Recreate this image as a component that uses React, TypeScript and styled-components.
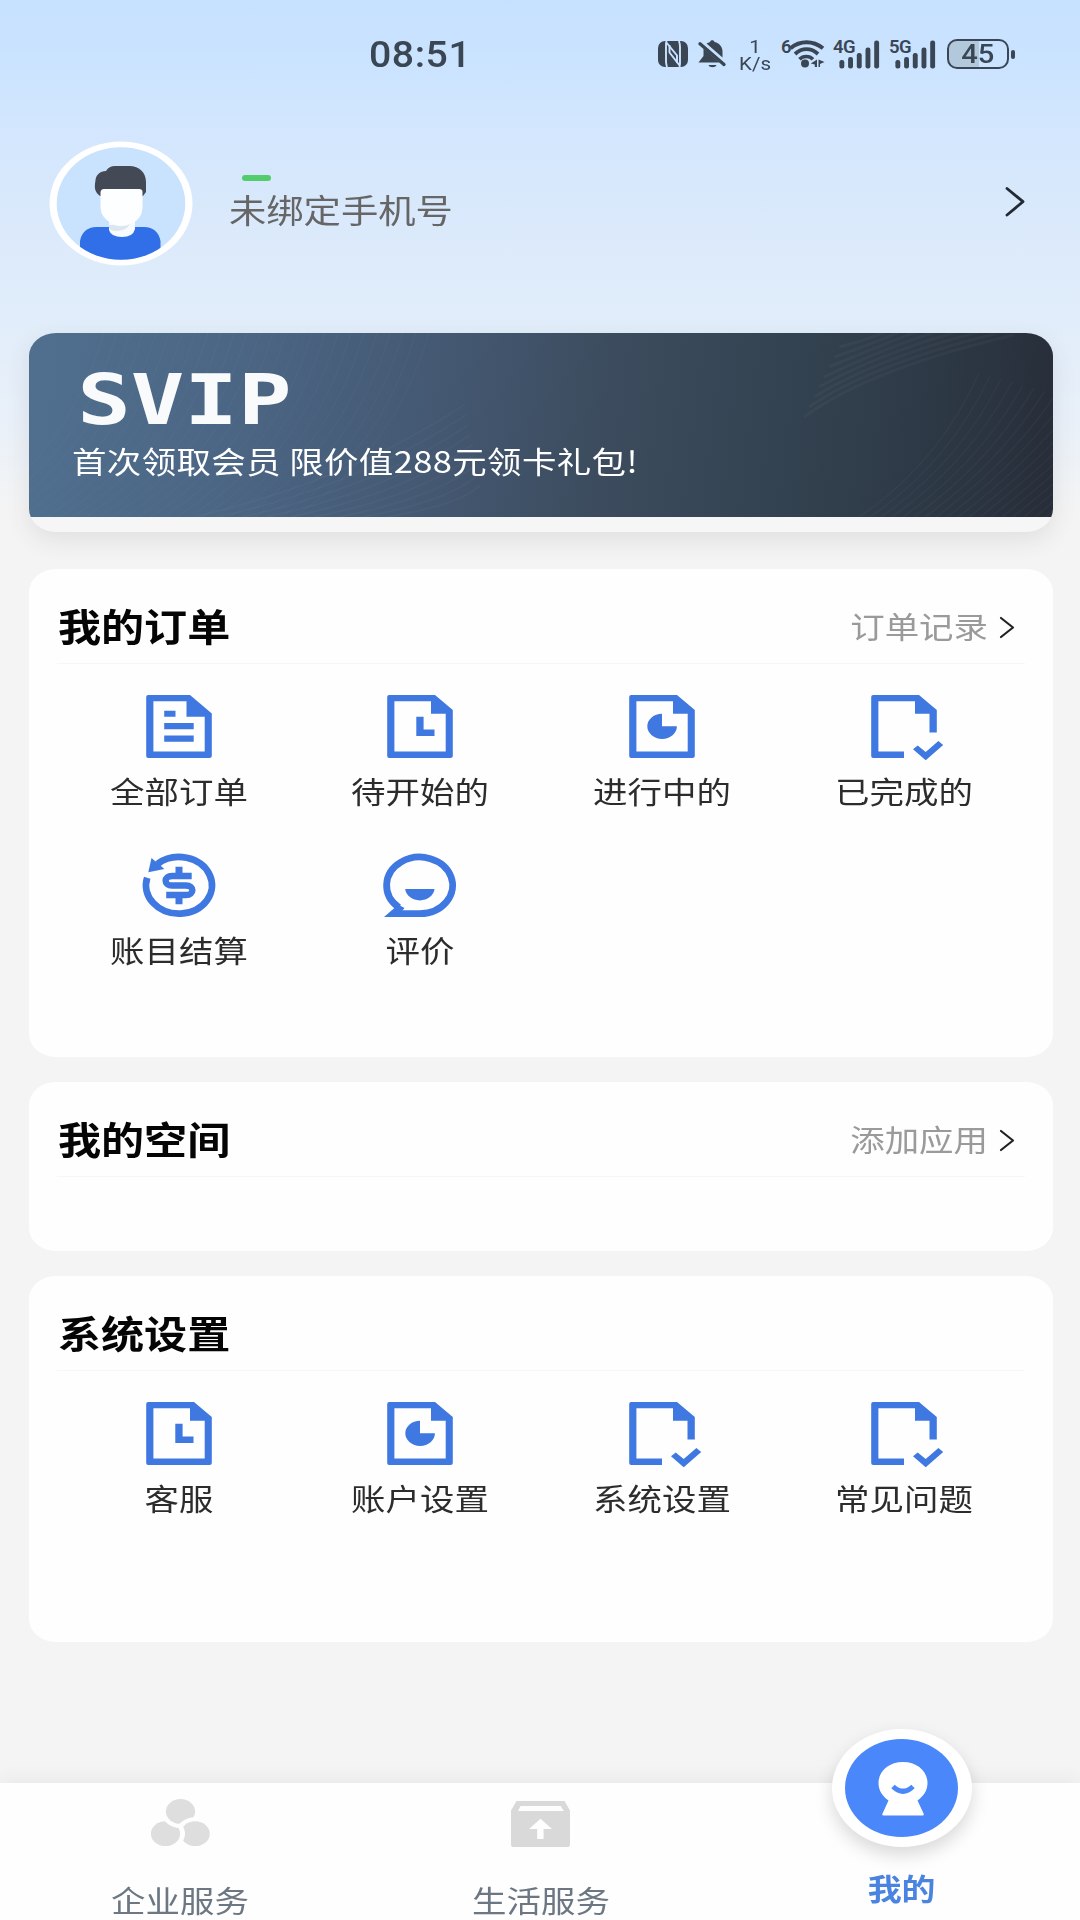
import React from "react";
import styled, { createGlobalStyle, css } from "styled-components";

const BLUE = "#3f78e0";
const INK = "#3a4654";
const STRETCH = 1.148;

const GlobalStyle = createGlobalStyle`
  *, *::before, *::after { box-sizing: border-box; }
  body {
    margin: 0;
    font-family: "Noto Sans CJK SC", "Noto Sans", sans-serif;
    background: #f4f4f4;
  }
  svg { display: block; overflow: visible; flex: none; }
`;

const Page = styled.div`
  display: flex;
  flex-direction: column;
  width: 1080px;
  height: 1920px;
  overflow: hidden;
  background: linear-gradient(180deg, #c6e1ff 0, #cae3ff 60px, #d2e6fe 120px, #dae9fb 220px, #e1edfa 320px, #e9f0f9 420px, #f4f4f4 510px);
`;

/* Wide-set text: glyphs are stretched horizontally from the given edge. */
const Wide = styled.span<{ $size: number; $color: string; $bold?: boolean; $from?: string; $track?: number }>`
  display: inline-block;
  margin: 0;
  font-size: ${(p) => p.$size}px;
  line-height: 40px;
  letter-spacing: ${(p) => p.$track ?? 0}px;
  color: ${(p) => p.$color};
  font-weight: ${(p) => (p.$bold ? 700 : 400)};
  white-space: nowrap;
  transform: scaleX(${STRETCH});
  transform-origin: ${(p) => p.$from ?? "center"} center;
`;

/* ---------- status bar ---------- */
const StatusBar = styled.header`
  display: flex;
  align-items: center;
  height: 108px;
  padding-left: 369px;
  font-family: Roboto, sans-serif;
  color: ${INK};
`;
const Clock = styled.time`
  width: 289px;
  padding-top: 2px;
  font-size: 36px;
  font-weight: 500;
  line-height: 40px;
  letter-spacing: 0.5px;
  transform: scaleX(1.09);
  transform-origin: left center;
`;
const Icons = styled.div`
  display: flex;
  align-items: center;
`;
const Gap = styled.i<{ $w: number }>`
  flex: none;
  width: ${(p) => p.$w}px;
`;
const Speed = styled.div`
  display: flex;
  flex-direction: column;
  align-items: center;
  width: 32px;
  font-size: 18px;
  line-height: 17px;
  font-weight: 400;
  padding-top: 1px;
  span { transform: scaleX(1.14); }
`;
const NetTag = styled.span<{ $w: number }>`
  align-self: flex-start;
  width: ${(p) => p.$w}px;
  font-size: 18.5px;
  font-weight: 600;
  line-height: 15px;
  letter-spacing: -0.5px;
  white-space: nowrap;
`;
const Signal = styled.div<{ $pull: number }>`
  display: flex;
  height: 29px;
  svg { margin-left: ${(p) => -p.$pull}px; }
`;
const Battery = styled.div`
  display: flex;
  align-items: center;
  justify-content: center;
  width: 62px;
  height: 30px;
  border: 2.5px solid ${INK};
  border-radius: 10px;
  background: linear-gradient(90deg, #b2c9dc 0 51%, transparent 51%);
  font-size: 26px;
  font-weight: 500;
  line-height: 26px;
  span { transform: scaleX(1.12); }
`;
const Nub = styled.i`
  width: 4px;
  height: 9px;
  margin-left: 2px;
  border-radius: 2px;
  background: ${INK};
`;

/* ---------- profile ---------- */
const Profile = styled.section`
  display: flex;
  align-items: flex-start;
  height: 225px;
  padding: 33px 55px 0 49px;
`;
const Who = styled.div`
  display: flex;
  flex-direction: column;
  align-items: flex-start;
  flex: 1;
  padding: 34px 0 0 36px;
`;
const Dash = styled.i`
  width: 29px;
  height: 6px;
  margin: 0 0 8px 13px;
  border-radius: 3px;
  background: #52cc6c;
`;

/* ---------- banner ---------- */
const Banner = styled.section`
  flex: none;
  width: 1024px;
  height: 199px;
  margin-left: 29px;
  border-radius: 27px / 23px;
  background: #f6f6f6;
  box-shadow: 0 8px 24px rgba(60, 60, 70, 0.11);
  overflow: hidden;
`;
const BannerFace = styled.div`
  display: grid;
  height: 184px;
  background: linear-gradient(97deg, #506f8e 0%, #4b6684 20%, #445872 40%, #3c4c5e 56%, #334250 74%, #2d3845 88%, #272d39 100%);
  > * { grid-area: 1 / 1; }
`;
const BannerText = styled.div`
  display: flex;
  flex-direction: column;
  align-items: flex-start;
  padding: 29px 0 0 43px;
`;
const Svip = styled.strong`
  font: 700 69px/76px "DejaVu Sans Mono", monospace;
  color: #f8fafc;
  padding-left: 4px;
  transform: scaleX(1.29);
  transform-origin: left center;
  margin-bottom: 2px;
`;

/* ---------- cards ---------- */
const Card = styled.section<{ $h: number; $top: number }>`
  flex: none;
  width: 1024px;
  height: ${(p) => p.$h}px;
  margin: ${(p) => p.$top}px 0 0 29px;
  padding: 0 28px;
  border-radius: 27px / 23px;
  background: #fefefe;
`;
const CardHead = styled.div`
  display: flex;
  align-items: center;
  justify-content: space-between;
  height: 95px;
  padding: 17px 11px 0 1px;
  border-bottom: 1px solid #f6f6f6;
`;
const More = styled.div`
  display: flex;
  align-items: center;
  gap: 12px;
  svg { margin-top: 6px; }
`;
const Grid = styled.div`
  display: grid;
  grid-template-columns: repeat(4, 241.8px);
  grid-auto-rows: 159px;
  padding: 31px 0 0 0.7px;
`;
const Entry = styled.div`
  display: flex;
  flex-direction: column;
  align-items: center;
  gap: 10.5px;
`;

/* ---------- tab bar ---------- */
const TabBar = styled.nav`
  display: grid;
  grid-template-columns: 360.4px 361px 361px;
  flex: none;
  height: 137px;
  margin-top: auto;
  background: #fefefe;
  box-shadow: 0 -4px 18px rgba(0, 0, 0, 0.05);
`;
const Tab = styled.div<{ $active?: boolean }>`
  display: flex;
  flex-direction: column;
  align-items: center;
  justify-content: flex-end;
  gap: 32px;
  height: 137px;
  padding-bottom: 1px;
  ${(p) =>
    p.$active &&
    css`
      gap: 20px;
      padding-bottom: 13px;
    `}
`;
const Bubble = styled.div`
  display: flex;
  align-items: center;
  justify-content: center;
  flex: none;
  width: 140px;
  height: 118px;
  border-radius: 50%;
  background: #fff;
  box-shadow: 0 8px 18px rgba(0, 0, 0, 0.15);
`;
const BubbleFace = styled.div`
  display: flex;
  align-items: center;
  justify-content: center;
  width: 113px;
  height: 98px;
  padding: 2px 0 0 2px;
  border-radius: 50%;
  background: #4987fa;
`;

/* ---------- drawings ---------- */
const Nfc = () => (
  <svg width="30" height="26" viewBox="0 0 30 26">
    <rect width="30" height="26" rx="7" fill={INK} />
    <g fill="none" stroke="#cbe3ff" strokeWidth="1.900" strokeLinejoin="round">
      <path d="M8.500 0Q8 2 8 4V20Q8 23 9 26M8 1 19 14.500V22" />
      <path d="M21.500 26Q22 24 22 22V6Q22 3 21 0M22 25 11.500 11.500V4" />
    </g>
  </svg>
);
const BellOff = () => (
  <svg width="28" height="28" viewBox="0 0 28 28" fill={INK}>
    <path d="M8.500 3.500 12 2C12.500-.5 16-.5 16.500 2 21.500 3 24.500 7 24.500 11.500V17.500Z" />
    <path d="M5.500 8.500V16L.5 22.500H21.500L5.500 8.500Z" />
    <path d="M10.500 25h8c-1 3-7 3-8 0Z" />
    <path d="m2 3.800 24 20.700" stroke={INK} strokeWidth="3.400" strokeLinecap="round" />
  </svg>
);
const Wifi = () => (
  <svg width="38" height="28" viewBox="0 0 38 28" fill="none" stroke={INK}>
    <path d="M1.500 8.200C11 .2 24 .2 34 8.200" strokeWidth="4" />
    <path d="M6 14C13 7.500 22 7.500 29 14" strokeWidth="3.800" />
    <path d="M10.500 19.200C14 15.500 20.500 15.500 24 19.200" strokeWidth="3.600" />
    <circle cx="16" cy="23.500" r="4" fill={INK} stroke="none" />
    <path d="M28 19.500v7.500h-2.200v-2.500l-4-1ZM29.500 19.500v7.500h1.500v-3l4.500-2Z" fill={INK} stroke="none" />
  </svg>
);
const Bars = () => (
  <svg width="40" height="29" viewBox="0 0 40 29" fill={INK}>
    {[8.5, 11.5, 15.5, 21, 28].map((h, i) => (
      <rect key={h} x={i * 8.7 - 0.6} y={28.5 - h} width="4.900" height={h} rx="2.200" />
    ))}
  </svg>
);
const Chevron = () => (
  <svg width="14" height="21" viewBox="0 0 14 21" fill="none" stroke="#222" strokeWidth="2.200" strokeLinecap="round" strokeLinejoin="round">
    <path d="M1 1 13 10.500 1 20" />
  </svg>
);
const Avatar = () => (
  <svg width="144" height="125" viewBox="0 0 144 125">
    <clipPath id="face"><ellipse cx="72" cy="62.500" rx="64.300" ry="56.300" /></clipPath>
    <ellipse cx="72" cy="62.500" rx="71.500" ry="62" fill="#fff" />
    <g clipPath="url(#face)">
      <rect width="144" height="125" fill="#c9e3fe" />
      <path d="M31 108V100Q33.500 86.500 47.500 86H95Q109 86.500 111.500 100V125H31Z" fill="#316fe8" />
      <path d="M60 80H86V88Q84 96 73 96Q62 96 60 89Z" fill="#f7fafe" />
      <path d="M65 84Q74 87 81 83Q77 90.500 66 90Q62 90 60 87V84Z" fill="#dce6ef" />
      <path d="M51 55C44 50 46 44 46.500 39C47 34 51 30 57 30C59 26.500 62 25 66 25H80C91 25 97 32 97 41V51L94 55Z" fill="#444956" />
      <path d="M51.500 51Q52 48 55 48H90Q93.500 48 93.500 51V67Q93 78 83 82Q72 86.500 62 82Q51.500 76 51.500 66Z" fill="#fdfeff" />
    </g>
  </svg>
);
const Waves = () => (
  <svg width="1024" height="184" viewBox="0 0 1024 184" fill="none" stroke="#c0ccd6">
    {Array.from({ length: 26 }, (_, i) => (
      <path key={`a${i}`} d={`M${-60 + i * 13} 184Q${40 + i * 13} 120 ${75 + i * 13} 0`} strokeWidth="1" opacity="0.050" />
    ))}
    {Array.from({ length: 9 }, (_, i) => (
      <path key={`b${i}`} d={`M${165 + i * 24} ${184}Q${320 + i * 14} ${148 + i * 3} ${435 + i * 2} ${72 + i * 10}`} strokeWidth="2" opacity="0.040" />
    ))}
    {Array.from({ length: 8 }, (_, i) => (
      <path key={`c${i}`} d={`M${775 + i * 5} ${84 - i * 10}Q${840 + i * 3} ${36 - i * 5} ${985 - i * 16} ${2 - i * 2}`} strokeWidth="3" opacity="0.040" />
    ))}
    {Array.from({ length: 22 }, (_, i) => (
      <path key={`d${i}`} d={`M${830 + i * 11} 184Q${910 + i * 10} 130 ${950 + i * 11} ${40 + i * 3}`} strokeWidth="1.500" opacity="0.045" />
    ))}
  </svg>
);

type IconName = "list" | "clock" | "pie" | "check" | "money" | "chat";
const DOC = "M6.200 0H52L69.800 15V61Q69.800 63 67.500 63H6.200Q4.200 63 4.200 61V2Q4.200 0 6.200 0ZM11.400 6.300V56.500H62.700V18.700H48V6.300Z";

const EntryIcon = ({ name }: { name: IconName }) => (
  <svg width="74" height="64" viewBox="0 0 74 64" fill={BLUE} fillRule="evenodd">
    {name === "list" && (
      <>
        <path d="M6.200 0H48L69.800 18.500V61Q69.800 63 67.500 63H6.200Q4.200 63 4.200 61V2Q4.200 0 6.200 0ZM11.400 6.300V56.500H62.700V21.700H44.500V6.300Z" />
        <path d="M22.200 15.700H33.500V21.700H22.200ZM22.200 28H51.700V34.300H22.200ZM22.200 40.400H51.700V46.800H22.200Z" />
      </>
    )}
    {name === "clock" && (
      <>
        <path d={DOC} />
        <path d="M33.300 21.700H40.600V34.400H51.500V41H33.300Z" />
      </>
    )}
    {name === "pie" && (
      <>
        <path d={DOC} />
        <path d="M37 31.300V18.700A14.800 12.600 0 1 0 51.900 31.300Z" />
      </>
    )}
    {name === "check" && (
      <>
        <path d="M6.200 0H52L69.800 15V37.400H62.500V18.700H48V6.300H11.400V56.500H37V63H6.200Q4.200 63 4.200 61V2Q4.200 0 6.200 0Z" />
        <path d="M46 54.300 50.700 50.500 58.700 57 71.400 46 76.200 50 58.700 65.300Z" />
      </>
    )}
    {name === "money" && (
      <>
        <g fill="none" stroke={BLUE} strokeWidth="6.800">
          <path d="M5.200 23.700A33 28.300 0 1 0 15.400 9.900" />
          <path d="M49.700 22H30C21.500 22 21.500 31.500 30 31.500H44C52.500 31.500 52.500 41 44 41H24.200" strokeWidth="6.400" />
          <path d="M37 12.700V22M37 41V50.300" strokeWidth="7" />
        </g>
        <path d="M9.500 4 6.300 18.300 22.400 15Z" />
      </>
    )}
    {name === "chat" && (
      <>
        <path d="M16 53.500A33 28.300 0 1 1 37 59.700H12" fill="none" stroke={BLUE} strokeWidth="6.800" />
        <path d="M1 63 12 53.500 14 50 21.500 54 19 57 20 63Z" />
        <path d="M22.200 35H51.500A14.700 12.400 0 0 1 22.200 35Z" />
      </>
    )}
  </svg>
);

const CirclesIcon = () => {
  const c = [
    { x: 29.5, y: 12.4 },
    { x: 14.5, y: 34.7 },
    { x: 44.2, y: 34.7 },
  ];
  const cutBy = [2, 0, 1];
  return (
    <svg width="59" height="48" viewBox="0 0 59 48">
      {c.map((p, i) => (
        <g key={i}>
          <mask id={`cut${i}`}>
            <rect width="59" height="48" fill="#fff" />
            <ellipse cx={c[cutBy[i]].x} cy={c[cutBy[i]].y} rx="19.500" ry="16.500" fill="#000" />
          </mask>
          <ellipse cx={p.x} cy={p.y} rx="14.600" ry="12.400" fill="#dedede" mask={`url(#cut${i})`} />
        </g>
      ))}
    </svg>
  );
};
const BoxIcon = () => (
  <svg width="59" height="46" viewBox="0 0 59 46" fill="#d9d9d9" fillRule="evenodd">
    <path d="M5.500 0H53.500L59 9.500V44Q59 46 57 46H2Q0 46 0 44V9.500ZM9.600 5 7 10H52.800L49.800 5ZM29.500 17.700 18 28H26.200V38H32.600V28H41Z" />
  </svg>
);
const MeIcon = () => (
  <svg width="50" height="54" viewBox="0 0 50 54">
    <path d="M25 0C39 0 49.500 9 49.500 21C49.500 28 46 34 39.500 38.500L45.800 52Q46 53.500 44.500 53.500H5.500Q4 53.500 4.300 52L10.500 38.500C4 34 .500 28 .500 21C.500 9 11 0 25 0Z" fill="#fff" />
    <path d="M15 24.500Q25 34 35 24.500" fill="none" stroke="#4987fa" strokeWidth="5" />
  </svg>
);

/* ---------- content ---------- */
const orders: [IconName, string][] = [
  ["list", "全部订单"],
  ["clock", "待开始的"],
  ["pie", "进行中的"],
  ["check", "已完成的"],
  ["money", "账目结算"],
  ["chat", "评价"],
];
const settings: [IconName, string][] = [
  ["clock", "客服"],
  ["pie", "账户设置"],
  ["check", "系统设置"],
  ["check", "常见问题"],
];

const Header = ({ title, more }: { title: string; more?: string }) => (
  <CardHead>
    <Wide as="h2" $size={37.5} $color="#050505" $bold $from="left">{title}</Wide>
    {more && (
      <More>
        <Wide $size={30} $color="#9a9a9a" $from="right">{more}</Wide>
        <Chevron />
      </More>
    )}
  </CardHead>
);
const Entries = ({ items }: { items: [IconName, string][] }) => (
  <Grid>
    {items.map(([icon, label]) => (
      <Entry key={label}>
        <EntryIcon name={icon} />
        <Wide $size={30} $color="#2c2c2c">{label}</Wide>
      </Entry>
    ))}
  </Grid>
);

export default function App() {
  return (
    <>
      <GlobalStyle />
      <Page>
        <StatusBar>
          <Clock>08:51</Clock>
          <Icons>
            <Nfc />
            <Gap $w={10} />
            <BellOff />
            <Gap $w={13} />
            <Speed><span>1</span><span>K/s</span></Speed>
            <Gap $w={10} />
            <Signal $pull={2}><NetTag $w={10}>6</NetTag><Wifi /></Signal>
            <Gap $w={6} />
            <Signal $pull={15}><NetTag $w={22}>4G</NetTag><Bars /></Signal>
            <Gap $w={9} />
            <Signal $pull={15}><NetTag $w={22}>5G</NetTag><Bars /></Signal>
            <Gap $w={10.5} />
            <Battery><span>45</span></Battery>
            <Nub />
          </Icons>
        </StatusBar>

        <Profile>
          <Avatar />
          <Who>
            <Dash />
            <Wide $size={32.5} $color="#666" $from="left">未绑定手机号</Wide>
          </Who>
          <svg width="20" height="124" viewBox="0 0 20 124" fill="none" stroke="#222a33" strokeWidth="2.800" strokeLinecap="round" strokeLinejoin="round">
            <path d="M2 47.500 18 60.700 2 74" />
          </svg>
        </Profile>

        <Banner>
          <BannerFace>
            <Waves />
            <BannerText>
              <Svip>SVIP</Svip>
              <Wide $size={30} $track={0.35} $color="#fff" $from="left">首次领取会员 限价值288元领卡礼包!</Wide>
            </BannerText>
          </BannerFace>
        </Banner>

        <Card $h={488} $top={37}>
          <Header title="我的订单" more="订单记录" />
          <Entries items={orders} />
        </Card>
        <Card $h={169} $top={25}>
          <Header title="我的空间" more="添加应用" />
        </Card>
        <Card $h={366} $top={25}>
          <Header title="系统设置" />
          <Entries items={settings} />
        </Card>

        <TabBar>
          <Tab>
            <CirclesIcon />
            <Wide $size={30} $color="#6c7783">企业服务</Wide>
          </Tab>
          <Tab>
            <BoxIcon />
            <Wide $size={30} $color="#6c7783">生活服务</Wide>
          </Tab>
          <Tab $active>
            <Bubble><BubbleFace><MeIcon /></BubbleFace></Bubble>
            <Wide $size={29.5} $color="#4a84e0" $bold>我的</Wide>
          </Tab>
        </TabBar>
      </Page>
    </>
  );
}
